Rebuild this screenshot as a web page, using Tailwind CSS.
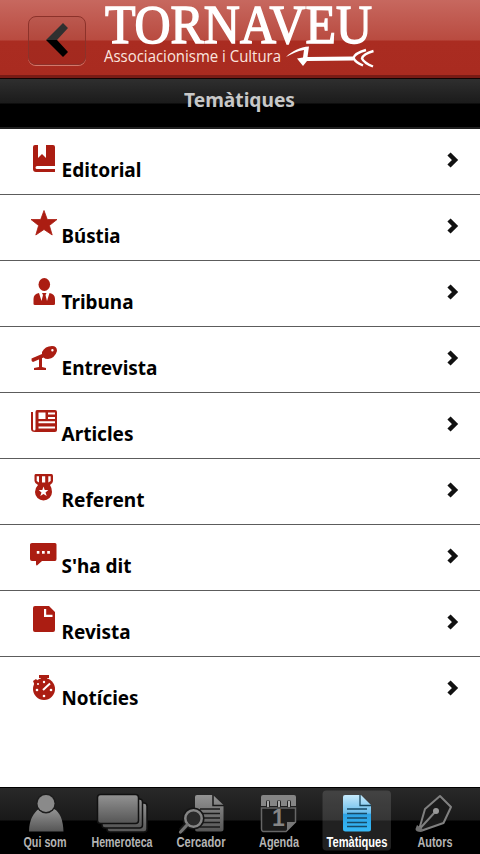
<!DOCTYPE html>
<html lang="ca">

<head>
	<meta charset="UTF-8">
	<meta name="viewport" content="width=device-width, initial-scale=1.0">
	<title>Tornaveu - Temàtiques</title>
	<script src="https://cdn.jsdelivr.net/npm/@tailwindcss/browser@4"></script>
</head>

<body class="h-[854px] w-[480px] flex flex-col overflow-hidden bg-white font-['Noto_Sans','Open_Sans',sans-serif]">
	<!-- Header -->
	<header class="h-[78px] shrink-0 flex pl-7 border-b-3 border-[#781b15] bg-linear-[180deg,#c7685f_0px,#b94b40_40px,#aa2c21_41px,#a92b20_75px]">
		<button aria-label="Enrere" class="mt-4 w-[58px] h-[49px] rounded-lg border border-[#8c322a] bg-black/3 shadow-[0_1px_0_#d4776a]">
			<svg class="block w-full h-full" viewBox="0 0 56 47">
				<defs>
					<linearGradient id="back" x1="0" y1="0" x2="0" y2="1">
						<stop offset=".5" stop-color="#303030" />
						<stop offset=".5" stop-color="#000" />
					</linearGradient>
				</defs>
				<path d="M34 6L17 23L34 40L39 35L28 23L39 11Z" fill="url(#back)" />
			</svg>
		</button>
		<svg class="ml-4 w-[276px] h-[75px] overflow-visible" viewBox="102 0 276 75" fill="#fff">
			<text x="105" y="42.500" font-family="Liberation Serif, serif" font-size="55" textLength="267" lengthAdjust="spacingAndGlyphs" stroke="#fff" stroke-width="1.500" class="leading-none">TORNAVEU</text>
			<text x="104" y="62" font-family="Open Sans, sans-serif" font-size="16" textLength="177" lengthAdjust="spacingAndGlyphs" fill="#fbe5df" class="leading-none">Associacionisme i Cultura</text>
			<path d="M286 57C292 51 300 47 309 46.500L307.500 57L353 56.500L355 58.500L353 60.500L307 61L303 66L297 58.500L303 57.500L304 50C297 51 292 54 286 57Z" />
			<path d="M366 50Q355 53 353.500 58Q355 62 363 65.500M373.500 51Q363 54 362 58.500Q364 63 373 66.500" fill="none" stroke="#fff" stroke-width="2.400" />
		</svg>
	</header>

	<!-- Section title -->
	<div class="h-[51px] shrink-0 flex justify-center border-t border-b-2 border-t-[#120404] border-b-[#202020] bg-linear-[180deg,#2f2f2f_0px,#1b1b1b_24px,#000_25px]">
		<h1 class="mt-[7px] text-[19px] leading-7 font-bold text-[#c8c8c8]"><svg class="block w-[112px] h-7" viewBox="0 0 112 28"><text x="0" y="21" textLength="111" lengthAdjust="spacingAndGlyphs" fill="currentColor">Temàtiques</text></svg></h1>
	</div>

	<!-- Topics -->
	<ul id="topics" class="flex-1 text-[20px] font-bold text-black"></ul>

	<!-- Tab bar -->
	<nav class="h-[67px] shrink-0 border-t border-black bg-linear-[180deg,#292929_0px,#191919_32px,#000_33px]">
		<svg class="block w-[480px] h-[66px]" viewBox="0 788 480 66" font-family="Liberation Sans Narrow, Liberation Sans, sans-serif" font-size="14" font-weight="700">
			<defs>
				<linearGradient id="grey" x1="0" y1="0" x2="0" y2="1">
					<stop stop-color="#939393" />
					<stop offset="1" stop-color="#555" />
				</linearGradient>
				<linearGradient id="blue" x1="0" y1="0" x2="0" y2="1">
					<stop stop-color="#c5e9fb" />
					<stop offset=".5" stop-color="#69bdec" />
					<stop offset=".52" stop-color="#2da2e5" />
					<stop offset="1" stop-color="#36b9f6" />
				</linearGradient>
			</defs>

			<!-- Qui som -->
			<path d="M29 831.500C29 820 34 812 39 809H54C60 812 63 820 63.500 831.500Z" fill="url(#grey)" />
			<circle cx="46" cy="803.500" r="10" fill="#1d1d1d" />
			<circle cx="46" cy="803.500" r="8.500" fill="#8a8a8a" />

			<!-- Hemeroteca -->
			<g fill="url(#grey)" stroke="#111" stroke-width="1.500">
				<rect x="107" y="803" width="40" height="29" rx="3" />
				<rect x="102" y="799" width="40.500" height="29" rx="3" />
				<rect x="97.500" y="794.500" width="41" height="29" rx="3" />
			</g>

			<!-- Cercador -->
			<path d="M195 797Q195 795 197 795H213L223.500 805V829Q223.500 831.500 221 831.500H197Q195 831.500 195 829Z" fill="url(#grey)" />
			<path d="M213 795V805.500H224" fill="none" stroke="#191919" stroke-width="1.500" />
			<path d="M200 809H220M200 813.500H220M200 818H220M200 822.500H220M200 827H220" stroke="#1b1b1b" stroke-width="1.300" />
			<path d="M196 815L181 831" stroke="#151515" stroke-width="6" />
			<circle cx="193.500" cy="818.500" r="11" fill="#151515" />
			<circle cx="193.500" cy="818.500" r="8.200" fill="#2a2a2a" stroke="#858585" stroke-width="2.500" />
			<path d="M187 825L180.500 832" stroke="#727272" stroke-width="3.200" stroke-linecap="round" />

			<!-- Agenda -->
			<path d="M261.500 808H295.500V822L286 831.500H263Q261.500 831 261.500 829Z" fill="#1b1b1b" stroke="#666" stroke-width="1.500" />
			<path d="M261 797Q261 795 263 795H294Q296 795 296 797V806H261Z" fill="#858585" />
			<path d="M268 802V806M279 802V806M289 802V806" stroke="#222" stroke-width="4" stroke-linecap="round" />
			<path d="M268 801.500V806.500M279 801.500V806.500M289 801.500V806.500" stroke="#aaa" stroke-width="2" stroke-linecap="round" />
			<path d="M287 831V822H296Z" fill="#777" />
			<text x="272" y="826" font-size="23" font-family="Liberation Sans, sans-serif" fill="#858585">1</text>

			<!-- Temàtiques, selected -->
			<rect x="322.500" y="790.500" width="68.500" height="60" rx="4" fill="#fff" fill-opacity=".13" />
			<path d="M345 795H361L371 805V829Q371 831.500 368.500 831.500H345.500Q343 831.500 343 829V797Q343 795 345 795Z" fill="url(#blue)" />
			<path d="M360 795V805.500H371" fill="none" stroke="#17475f" stroke-width="1.300" />
			<path d="M347 809H367M347 813.500H367M347 818H367M347 822.500H367M347 826.500H367" stroke="#174a66" stroke-width="1.300" />

			<!-- Autors -->
			<path d="M419.500 828L425 809L440 796L451 807L443.500 823L422 830.500ZM436 811L419.500 829" fill="#1b1b1b" stroke="#808080" stroke-width="2" stroke-linejoin="round" />
			<path d="M417 825L424 830L421 832Q415.500 832 415.500 829Z" fill="#707070" />
			<circle cx="436" cy="811" r="3" fill="#999" />

			<g fill="#b4b4b4" text-anchor="middle">
				<text x="45" y="847" textLength="43" lengthAdjust="spacingAndGlyphs">Qui som</text>
				<text x="122" y="847" textLength="61" lengthAdjust="spacingAndGlyphs">Hemeroteca</text>
				<text x="201" y="847" textLength="49" lengthAdjust="spacingAndGlyphs">Cercador</text>
				<text x="279" y="847" textLength="40" lengthAdjust="spacingAndGlyphs">Agenda</text>
				<text x="357" y="847" textLength="61" lengthAdjust="spacingAndGlyphs" fill="#fff">Temàtiques</text>
				<text x="435" y="847" textLength="35" lengthAdjust="spacingAndGlyphs">Autors</text>
			</g>
		</svg>
	</nav>
</body>

<script>
	const topics = [
		{ name: "Editorial", width: 79, icon: `<path d="M5 1H8V14L12 10L16 14V1H23Q25 1 25 3V22H7Q5.500 22 5.500 23.500T7 25H25V28H6Q3 28 3 25V3Q3 1 5 1Z"/>` },
		{ name: "Bústia", width: 58, icon: `<path d="M14 .5L17.300 9.500H27L19.400 15.500L22.200 25L14 19.500L5.800 25L8.600 15.500L1 9.500H10.700Z" stroke="currentColor" stroke-linejoin="round" stroke-width=".8"/>` },
		{ name: "Tribuna", width: 71, icon: `<ellipse cx="14.300" cy="8.500" rx="5.800" ry="6.500"/><path d="M3.500 28V23Q3.500 18 9 17L11.500 25L13 19L12 17H16.500L15.500 19L17 25L19.500 17Q25 18 25 23V28Q25 29 23.500 29H5Q3.500 29 3.500 28Z"/>` },
		{ name: "Entrevista", width: 95, icon: `<path fill-rule="evenodd" d="M12 10Q15 4 22 4Q27 4 27 9Q25 16 18 17Q15 17 13.500 15.500L3 20Q1 19 1.500 16.500L12 12ZM21.200 8.300A1.200 1.200 0 1 0 23.600 8.300A1.200 1.200 0 1 0 21.200 8.300Z"/><path d="M9 16H12V25L16 26V28H4V26L9 25Z"/>` },
		{ name: "Articles", width: 71, icon: `<path fill-rule="evenodd" d="M7 2H25Q27 2 27 4V22Q27 24 25 24H5Q1 24 1 21V4H3V21Q3 22.500 4.300 22.500T5.500 21V4Q5.500 2 7 2ZM8.500 4.500V11H15.500V4.500ZM18 4.500V6.500H25V4.500ZM18 9V11H25V9ZM8.500 13.300V15.300H25V13.300ZM8.500 18.500V20.500H25V18.500Z"/>` },
		{ name: "Referent", width: 82, icon: `<path fill-rule="evenodd" d="M5.500 0H21.500Q23 0 23 2V7Q23 9 20 11Q22 14 22 18A8.500 8.500 0 1 1 5 18Q5 14 8 11Q4.500 9 4.500 7V1.500Q4.500 0 5.500 0ZM6.700 2.200V7L9 8.500V2.200ZM12 2.200V8.500H15.200V2.200ZM18.300 2.200V8.500L20.700 7V2.200ZM13.500 12.500L12.300 16H8.700L11.500 18.500L10.300 22L13.500 20L16.700 22L15.500 18.500L18.300 16H14.700Z"/>` },
		{ name: "S'ha dit", width: 69, icon: `<path fill-rule="evenodd" d="M2 3H25Q26.500 3 26.500 4.500V19Q26.500 21 25 21H12L7 25.500Q6 25.500 6 24V21H2Q0 21 0 19V4.500Q0 3 2 3ZM6.800 11V13.700H9.400V11ZM12 11V13.700H14.700V11ZM17.200 11V13.700H19.900V11Z"/>` },
		{ name: "Revista", width: 68, icon: `<path fill-rule="evenodd" d="M5 0H19L25 6V24Q25 26 23 26H5Q3 26 3 24V2Q3 0 5 0ZM14 3V11H22.500V8.800H16.200V3Z"/>` },
		{ name: "Notícies", width: 76, icon: `<path d="M9 3H19V6H17V8H11V6H9ZM3 9L6 7L9 10L5 14Z"/><circle cx="14" cy="17" r="11"/><path d="M13 18L20 11.500" stroke="#fff" stroke-width="2"/><g fill="#fff"><circle cx="14" cy="10" r="1.200"/><circle cx="8" cy="12" r="1"/><circle cx="7" cy="18" r="1.300"/><circle cx="21" cy="18" r="1.300"/><circle cx="14" cy="24" r="1.300"/></g>` },
	];

	document.getElementById('topics').innerHTML = topics.map((topic, i) => `
		<li class="flex h-[66px] pl-[30px] pr-5 ${i < topics.length - 1 ? 'border-b border-[#5c5c5c]' : ''}">
			<svg class="mt-[15px] w-7 h-[30px] shrink-0 text-[#ab1d12]" viewBox="0 0 28 30" fill="currentColor">${topic.icon}</svg>
			<svg class="mt-6 ml-[3px] w-[110px] h-[34px]" viewBox="0 0 110 34">
				<text x=".5" y="24" textLength="${topic.width + 1}" lengthAdjust="spacingAndGlyphs">${topic.name}</text>
			</svg>
			<svg class="ml-auto mt-[22px] w-[14px] h-[18px]" viewBox="0 0 14 18" fill="none" stroke="#111" stroke-width="4.500">
				<path d="M3 3L9 9L3 15" />
			</svg>
		</li>
	`).join('');
</script>

</html>
